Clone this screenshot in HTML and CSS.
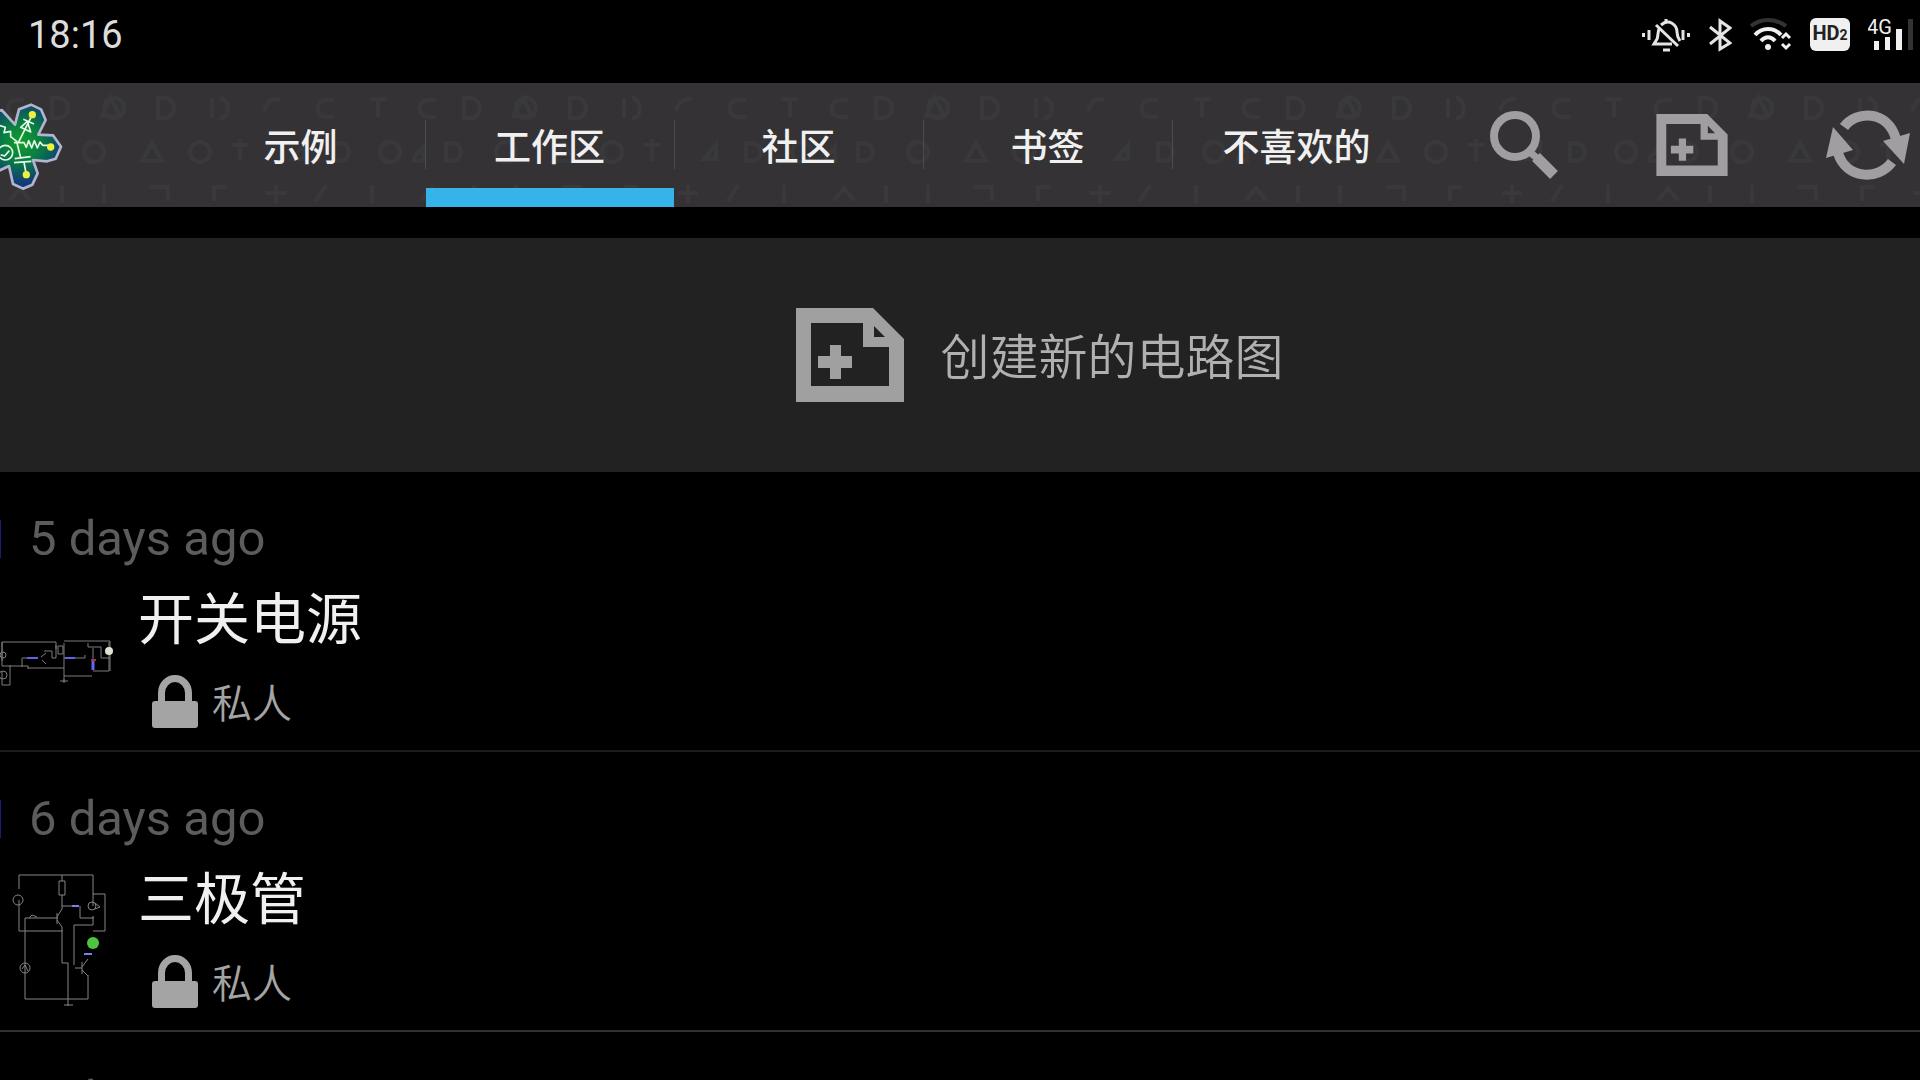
FILE: index.html
```
<!DOCTYPE html>
<html lang="zh-CN">
<head>
	<meta charset="UTF-8">
	<meta name="viewport" content="width=device-width, initial-scale=1">
	<title>工作区</title>
	<link rel="stylesheet" href="styles.css">
</head>
<body>
	<!-- shared icons -->
	<svg class="defs" width="0" height="0" aria-hidden="true">
		<symbol id="icon-new" viewBox="0 0 108 94">
			<path fill-rule="evenodd" d="M0 0H77L108 31V94H0ZM15 15V78H93V39H67V15ZM78 18V29H89Z"/>
			<path d="M34 37H45V48H56V60H45V71H34V60H22V48H34Z"/>
		</symbol>
		<symbol id="icon-lock" viewBox="0 0 46 54">
			<path d="M9.500 30V19a13.500 14.500 0 0 1 27 0V30" fill="none" stroke="currentColor" stroke-width="7"/>
			<rect x="0" y="27" width="46" height="27" rx="3"/>
		</symbol>
	</svg>

	<div class="status-bar">
		<span class="clock">18:16</span>
		<div class="status-icons">
			<svg width="48" height="36" viewBox="0 0 48 36" fill="none" stroke="#e4e4e4" stroke-width="3">
				<path d="M1.500 16v4M7 13v10M41 13v10M46.500 16v4"/>
				<path d="M14 8 36 29M17 12c-1 2-1 8-2 10l-3 5h18M19 8c8-7 16 0 16 7 0 4 1 6 3 9" />
				<path d="M21 33h7M24 2v3"/>
			</svg>
			<svg width="24" height="36" viewBox="0 0 24 36" fill="none" stroke="#e4e4e4" stroke-width="3">
				<path d="M2 10 22 26 12 32V4l10 7L2 27"/>
			</svg>
			<svg width="42" height="36" viewBox="0 0 42 36" fill="none" stroke="#f0f0f0" stroke-width="4">
				<path d="M1 9C11 1 25 1 36 9" stroke="#333"/>
				<path d="M5 18C12 10 24 10 31 18M11 24c4-5 10-5 14 0"/>
				<circle cx="18" cy="30" r="3" fill="#f0f0f0" stroke="none"/>
				<path d="m32 21 4-4 4 4m0 6-4 4-4-4" stroke-width="3"/>
			</svg>
			<span class="hd">HD<small>2</small></span>
			<svg class="signal" width="46" height="36" viewBox="0 0 46 36" fill="#f0f0f0">
				<text x="-1" y="17">4G</text>
				<path d="M6 24h5v9H6zM17 20h5v13h-5zM28 12h6v21h-6z"/>
				<path d="M40 2h5v31h-5z" fill="#333"/>
			</svg>
		</div>
	</div>

	<header class="action-bar">
		<svg class="pattern" width="100%" height="100%" aria-hidden="true">
			<defs>
				<pattern id="parts" width="412" height="124" patternUnits="userSpaceOnUse">
					<g fill="none" stroke="#39383b" stroke-width="4">
						<path d="M24 17h-8a8 8 0 0 0 0 17h8M52 15v20h6a10 10 0 0 0 0-20zM102 33l9-18 9 18zM158 15v20h6a10 10 0 0 0 0-20zM212 15v20m8-20c9 0 12 20 0 20M264 28c4-12 8-12 16-12M334 17h-8a8 8 0 0 0 0 17h8M370 16h16m-8 0v18"/>
						<circle cx="114" cy="25" r="10"/>
						<path d="M-1 78l12-14v14zM34 60v18h6a9 9 0 0 0 0-18zM142 78l10-18 10 18zM232 62h16m-8-6v22M292 76l12-14v14zM334 60v18h6a9 9 0 0 0 0-18z"/>
						<circle cx="94" cy="69" r="10"/><circle cx="200" cy="69" r="10"/><circle cx="390" cy="69" r="10"/>
						<path d="M10 117l10-12 10 12M62 102v18M104 102v18M150 104h18v14M214 118v-14h12M266 110h20m-10-8v18M316 118l10-16M372 102v18"/>
					</g>
				</pattern>
			</defs>
			<rect width="100%" height="100%" fill="url(#parts)"/>
		</svg>
		<svg class="logo" width="80" height="110" viewBox="0 0 240 330">
			<defs>
				<radialGradient id="board" gradientUnits="userSpaceOnUse" cx="65" cy="155" r="125">
					<stop offset="0" stop-color="#12a02c"/>
					<stop offset="0.500" stop-color="#087a45"/>
					<stop offset="1" stop-color="#123a78"/>
				</radialGradient>
			</defs>
			<path d="M-30 72 5 60l40 44 12-46 36-14 30 14 14 32-22 44 44 2 24 34-16 36-26 8-42-4 14 40-16 34-28 12-30-14-12-54-42 20z" fill="url(#board)" stroke="#b3b5cf" stroke-width="8" stroke-linejoin="round"/>
			<g fill="none" stroke="#e4fbe4" stroke-width="5" stroke-linejoin="round">
				<path d="M55 158l18-36 20-40M62 112l30 14-10-32zM70 88l32 14"/>
				<path d="M42 158h30l7 14 7-20 9 22 8-22 9 22 8-18 8 10h16"/>
				<path d="M-2 106l18 6-4 16 20-4 0 16 18 14 12 50M44 206l48-6M42 218l52-4M72 217l6 32"/>
				<circle cx="16" cy="188" r="22"/>
				<path d="M2 194l12 4 14-16"/>
			</g>
			<g fill="#eef03c">
				<circle cx="97" cy="74" r="11"/><circle cx="152" cy="171" r="11"/><circle cx="79" cy="254" r="11"/>
			</g>
		</svg>
		<nav class="tabs">
			<a href="#">示例</a>
			<a href="#" class="active">工作区</a>
			<a href="#">社区</a>
			<a href="#">书签</a>
			<a href="#">不喜欢的</a>
		</nav>
		<div class="actions">
			<button type="button" aria-label="搜索">
				<svg width="68" height="70" viewBox="0 0 68 70" fill="none" stroke="currentColor">
					<circle cx="25" cy="26" r="21" stroke-width="8"/>
					<path d="M41 43l7 6" stroke-width="7"/>
					<path d="M46 47l18 18" stroke-width="11"/>
				</svg>
			</button>
			<button type="button" aria-label="新建">
				<svg width="72" height="62"><use href="#icon-new"/></svg>
			</button>
			<button type="button" aria-label="刷新">
				<svg width="84" height="70" viewBox="0 0 84 70" fill="currentColor">
					<path d="M18 17C30 0 62 0 70 29M66 52C52 71 20 69 12 43" fill="none" stroke="currentColor" stroke-width="10"/>
					<path d="M57 31l27-8-6 31zM7 17l20 23-27 8z"/>
				</svg>
			</button>
		</div>
	</header>

	<main>
		<button type="button" class="create">
			<svg width="108" height="94"><use href="#icon-new"/></svg>
			<span>创建新的电路图</span>
		</button>

		<ul class="list">
			<li class="item">
				<a href="#">
					<span class="date">5 days ago</span>
					<svg class="thumb" width="120" height="146" viewBox="0 0 120 146">
						<g fill="none" stroke="#7d7d7d">
							<path d="M2 80V61H56V68M64 60h46v30M64 62v40M2 61v24h26v3M10 84v20H2V90M22 86v-9h16M28 87h36M41 76l5-4M42 79l4 4M44 70h8v7h4V64M64 77h21v-3M64 95h28M64 98v3M60 100h8M88 62v4h13v11h9M93 67v20M93 90h16V61"/>
							<circle cx="3" cy="74" r="3"/><circle cx="3" cy="94" r="4"/>
							<path d="M58 65h5v8h-5z"/>
						</g>
						<path d="M27 77h11M65 77h10" stroke="#6262e8" stroke-width="2"/>
						<path d="M93 80v9" stroke="#6565ef" stroke-width="3"/>
						<path d="M91 79h5" stroke="#a33" stroke-width="2"/>
						<circle cx="109" cy="70" r="4" fill="#dfe2cf"/>
					</svg>
					<span class="title">开关电源</span>
					<span class="access"><svg width="46" height="54"><use href="#icon-lock"/></svg>私人</span>
				</a>
			</li>
			<li class="item">
				<a href="#">
					<span class="date">6 days ago</span>
					<svg class="thumb" width="120" height="146" viewBox="0 0 120 146">
						<g fill="none" stroke="#858585">
							<path d="M19 28V14H93V45M19 39V70H63M62 14v6M62 34v14M62 45h17M80 45v12h14M93 33h12v37H93M93 55v9H74V104M25 57H58M57 52v11M57 56l5-8M57 59l5 7v36h6v43M25 57V138H88V114M75 107h7M82 101v12M82 106l6-8M82 109l6 6M64 144h9"/>
							<circle cx="18" cy="39" r="5"/><circle cx="92" cy="45" r="4"/><circle cx="25" cy="107" r="5"/>
							<path d="M59 20h6v14h-6zM29 57l3-3 5 2M22 108l3-4 3 6M95 42l5 4-5 2"/>
						</g>
						<path d="M72 45h7M84 93h8" stroke="#7d7df2" stroke-width="2"/>
						<circle cx="93" cy="82" r="6" fill="#4fc53f"/>
					</svg>
					<span class="title">三极管</span>
					<span class="access"><svg width="46" height="54"><use href="#icon-lock"/></svg>私人</span>
				</a>
			</li>
			<li class="item">
				<a href="#">
					<span class="date">6 days ago</span>
				</a>
			</li>
		</ul>
	</main>
</body>
</html>
```
FILE: styles.css
```
*{
	margin: 0;
	padding: 0;
	box-sizing: border-box;
}
body{
	height: 100vh;
	overflow: hidden;
	background: #000;
	color: #f0f0f0;
	font-family: Roboto, "Noto Sans CJK SC", sans-serif;
}
a{
	color: inherit;
	text-decoration: none;
}
button{
	border: 0;
	background: none;
	color: inherit;
	font: inherit;
	cursor: pointer;
}
svg{
	display: block;
	flex: none;
}
.defs{
	position: absolute;
}
use{
	fill: currentColor;
}

/* status bar */
.status-bar{
	display: flex;
	align-items: center;
	justify-content: space-between;
	height: 83px;
	padding: 0 6px 14px 28px;
}
.clock{
	font-size: 38px;
	color: #dcdcdc;
}
.status-icons{
	display: flex;
	align-items: center;
	gap: 18px;
}
.hd{
	width: 40px;
	border-radius: 6px;
	background: #f0f0f0;
	color: #222;
	font-size: 20px;
	font-weight: 700;
	line-height: 31px;
	text-align: center;
}
.hd small{
	font-size: 14px;
}
.signal text{
	font-size: 20px;
}

/* action bar */
.action-bar{
	position: relative;
	display: flex;
	align-items: center;
	height: 124px;
	background: #343234;
}
.pattern{
	position: absolute;
	top: 0;
	left: 0;
}
.logo{
	position: relative;
	margin-right: 96px;
}
.tabs{
	position: relative;
	display: flex;
	height: 100%;
}
.tabs a{
	display: flex;
	align-items: center;
	justify-content: center;
	position: relative;
	width: 249px;
	font-size: 37px;
	font-weight: 500;
}
.tabs a + a::before{
	content: "";
	position: absolute;
	left: 0;
	top: 37px;
	width: 1px;
	height: 49px;
	background: #4d4b4d;
}
.tabs .active::after{
	content: "";
	position: absolute;
	left: 1px;
	right: 0;
	bottom: 0;
	height: 19px;
	background: #36b3e9;
}
.actions{
	position: relative;
	display: flex;
	flex: 1;
	align-items: center;
	justify-content: space-between;
	padding: 0 10px 0 69px;
	color: #a19ea1;
}

/* create row */
.create{
	display: flex;
	align-items: center;
	justify-content: center;
	gap: 36px;
	width: 100%;
	height: 234px;
	margin-top: 31px;
	padding-left: 160px;
	background: #222;
	color: #a0a0a0;
	font-size: 49px;
	font-weight: 350;
}
.create span{
	padding-bottom: 4px;
	color: #b0b0b0;
}

/* circuit list */
.list{
	list-style: none;
}
.item{
	height: 280px;
	border-bottom: 2px solid #1c1c1c;
}
.item + .item{
	border-color: #303030;
}
.item a{
	display: grid;
	grid-template-columns: 138px 1fr;
	grid-template-rows: 56px 106px 56px;
	align-items: center;
	padding-top: 39px;
}
.date{
	grid-column: 1 / 3;
	padding-left: 28px;
	border-left: 1px solid #1c1c78;
	color: #5c5c5c;
	font-size: 49px;
	line-height: 38px;
}
.thumb{
	grid-column: 1;
	grid-row: 2 / 4;
	align-self: start;
	margin-top: 14px;
}
.title{
	font-size: 56px;
	line-height: 72px;
}
.access{
	display: flex;
	align-items: center;
	gap: 14px;
	padding-left: 14px;
	color: #a4a4a4;
	font-size: 40px;
	font-weight: 350;
}
```
